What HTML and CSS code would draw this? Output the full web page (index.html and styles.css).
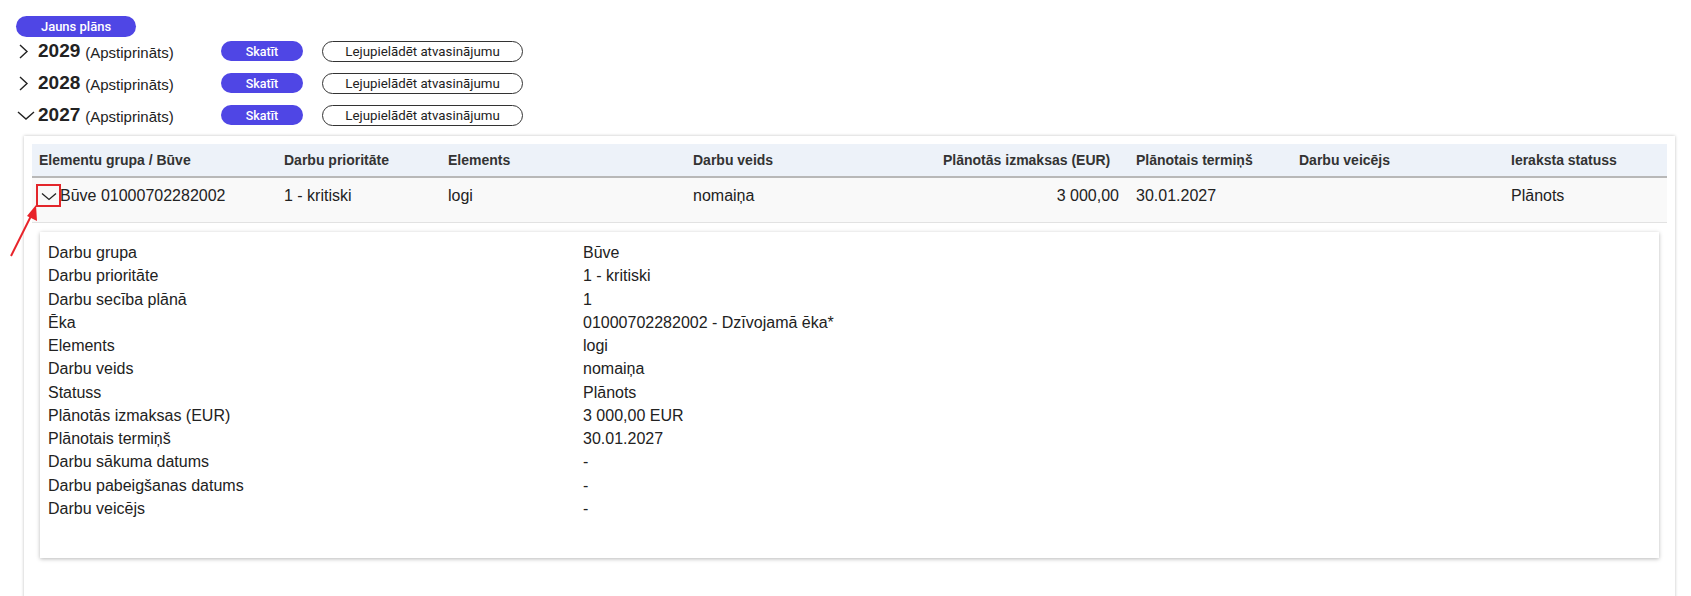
FILE: index.html
```html
<!DOCTYPE html>
<html lang="lv">
<head>
<meta charset="utf-8">
<title>Plāni</title>
<link rel="stylesheet" href="styles.css">
</head>
<body>
<div class="page">
  <button class="btn btn-primary btn-new">Jauns plāns</button>
  <div class="plans">
    <div class="plan-row">
      <div class="plan-title">
        <svg class="chev" width="21" height="16" viewBox="0 0 21 16"><path d="M3 2 L10 8.5 L3 15" fill="none" stroke="#222" stroke-width="1.4"/></svg>
        <span class="year">2029</span><span class="state">(Apstiprināts)</span>
      </div>
      <button class="btn btn-primary btn-view">Skatīt</button>
      <button class="btn btn-outline">Lejupielādēt atvasinājumu</button>
    </div>
    <div class="plan-row">
      <div class="plan-title">
        <svg class="chev" width="21" height="16" viewBox="0 0 21 16"><path d="M3 2 L10 8.5 L3 15" fill="none" stroke="#222" stroke-width="1.4"/></svg>
        <span class="year">2028</span><span class="state">(Apstiprināts)</span>
      </div>
      <button class="btn btn-primary btn-view">Skatīt</button>
      <button class="btn btn-outline">Lejupielādēt atvasinājumu</button>
    </div>
    <div class="plan-row">
      <div class="plan-title">
        <svg class="chev" width="21" height="16" viewBox="0 0 21 16"><path d="M1 5 L9 12 L17 5" fill="none" stroke="#222" stroke-width="1.4"/></svg>
        <span class="year">2027</span><span class="state">(Apstiprināts)</span>
      </div>
      <button class="btn btn-primary btn-view">Skatīt</button>
      <button class="btn btn-outline">Lejupielādēt atvasinājumu</button>
    </div>
  </div>

  <div class="card">
    <div class="grid head">
      <div class="th">Elementu grupa / Būve</div>
      <div class="th">Darbu prioritāte</div>
      <div class="th">Elements</div>
      <div class="th">Darbu veids</div>
      <div class="th num">Plānotās izmaksas (EUR)</div>
      <div class="th">Plānotais termiņš</div>
      <div class="th">Darbu veicējs</div>
      <div class="th">Ieraksta statuss</div>
    </div>
    <div class="grid row">
      <div class="td first">
        <span class="toggle"><svg width="16" height="9" viewBox="0 0 16 9"><path d="M1 1.5 L8 7.5 L15 1.5" fill="none" stroke="#222" stroke-width="1.3"/></svg></span>Būve 01000702282002
      </div>
      <div class="td">1 - kritiski</div>
      <div class="td">logi</div>
      <div class="td">nomaiņa</div>
      <div class="td num">3 000,00</div>
      <div class="td">30.01.2027</div>
      <div class="td"></div>
      <div class="td">Plānots</div>
    </div>
    <div class="expand">
      <div class="detail">
        <div class="dl">Darbu grupa</div><div class="dv">Būve</div>
        <div class="dl">Darbu prioritāte</div><div class="dv">1 - kritiski</div>
        <div class="dl">Darbu secība plānā</div><div class="dv">1</div>
        <div class="dl">Ēka</div><div class="dv">01000702282002 - Dzīvojamā ēka*</div>
        <div class="dl">Elements</div><div class="dv">logi</div>
        <div class="dl">Darbu veids</div><div class="dv">nomaiņa</div>
        <div class="dl">Statuss</div><div class="dv">Plānots</div>
        <div class="dl">Plānotās izmaksas (EUR)</div><div class="dv">3 000,00 EUR</div>
        <div class="dl">Plānotais termiņš</div><div class="dv">30.01.2027</div>
        <div class="dl">Darbu sākuma datums</div><div class="dv">-</div>
        <div class="dl">Darbu pabeigšanas datums</div><div class="dv">-</div>
        <div class="dl">Darbu veicējs</div><div class="dv">-</div>
      </div>
    </div>
  </div>

  <svg class="arrow" width="60" height="270" viewBox="0 0 60 270">
    <line x1="11" y1="256" x2="32" y2="214" stroke="#e8232a" stroke-width="2"/>
    <polygon points="36,205 37,221 27,216" fill="#e8232a"/>
  </svg>
</div>
</body>
</html>
```

FILE: styles.css
```css
html, body {
  margin: 0;
  padding: 0;
  background: #fff;
}

.page {
  position: relative;
  padding: 16px 16px 0 16px;
  font-family: "Liberation Sans", Arial, sans-serif;
  color: #222;
}

.btn {
  font-family: Roboto, "Liberation Sans", sans-serif;
  border-radius: 999px;
  box-sizing: border-box;
  cursor: pointer;
  padding: 0;
  display: inline-flex;
  align-items: center;
  justify-content: center;
}

.btn-primary {
  background: #4f46e5;
  border: none;
  color: #fff;
  font-weight: 500;
}

.btn-new {
  width: 120px;
  height: 21px;
  font-size: 13px;
  display: flex;
}

.plans {
  display: flex;
  flex-direction: column;
  gap: 4px;
}

.plan-row {
  display: flex;
  align-items: center;
  height: 28px;
}

.plan-title {
  width: 205px;
  display: flex;
  align-items: center;
  font-family: "Liberation Sans", Arial, sans-serif;
  color: #222;
}

.chev {
  flex: none;
  margin-left: 1px;
  margin-right: 0;
}

.year {
  font-size: 19px;
  font-weight: 700;
  margin-right: 5px;
}

.state {
  font-size: 15px;
  padding-top: 2px;
}

.btn-view {
  width: 82px;
  height: 20px;
  font-size: 12.5px;
  margin-right: 19px;
}

.btn-outline {
  width: 201px;
  height: 21px;
  background: #fff;
  border: 1px solid #333;
  color: #222;
  font-size: 13.3px;
}

.card {
  margin: 7px 0 0 8px;
  padding: 8px 8px 60px 8px;
  background: #fff;
  box-shadow: 0 0 3px rgba(0, 0, 0, 0.25);
}

.grid {
  display: grid;
  grid-template-columns: 245px 164px 245px 250px 193px 163px 212px 163px;
}

.head {
  background: #edf2f9;
  height: 32px;
  border-bottom: 2px solid #b8b8b8;
  align-items: center;
}

.th {
  padding: 0 7px;
  font-size: 14px;
  font-weight: 700;
  color: #333;
  white-space: nowrap;
}

.th.num {
  text-align: right;
  padding-right: 24px;
}

.row {
  background: #f9f9f9;
  height: 44px;
  border-bottom: 1px solid #e2e2e2;
  align-items: start;
}

.td {
  padding: 8px 7px 0 7px;
  font-size: 16px;
  line-height: 20px;
  color: #222;
  white-space: nowrap;
}

.td.num {
  text-align: right;
  padding-right: 10px;
}

.td.first {
  display: flex;
  align-items: center;
  padding-top: 6px;
  padding-left: 4px;
}

.toggle {
  width: 25px;
  height: 23px;
  box-sizing: border-box;
  border: 2px solid #e3262b;
  display: inline-flex;
  align-items: center;
  justify-content: center;
  padding-top: 1px;
  margin-right: -1px;
}

.expand {
  padding: 9px 8px 0 8px;
}

.detail {
  background: #fff;
  box-shadow: 0 1px 4px rgba(0, 0, 0, 0.28);
  display: grid;
  grid-template-columns: 535px 1fr;
  padding: 9px 8px 38px 8px;
  font-size: 16px;
  line-height: 23.27px;
  color: #222;
}

.arrow {
  position: absolute;
  left: 0;
  top: 0;
  overflow: visible;
}
```
